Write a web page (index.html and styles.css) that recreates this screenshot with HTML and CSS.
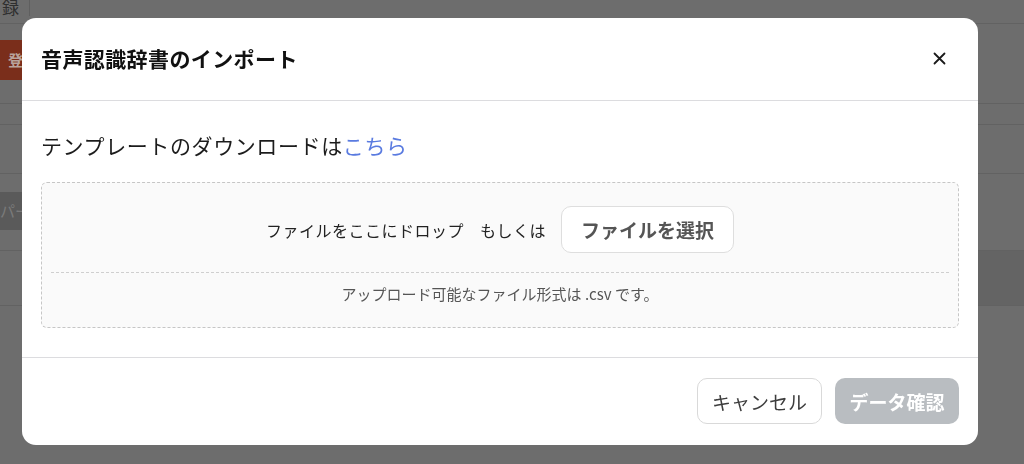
FILE: index.html
```html
<!DOCTYPE html>
<html lang="ja">
<head>
<meta charset="utf-8">
<title>音声認識辞書のインポート</title>
<link rel="stylesheet" href="styles.css">
</head>
<body>
<div class="page">
  <div class="row r0"><div class="cell-btn">録</div></div>
  <div class="row r1"><div class="red-btn">登</div></div>
  <div class="row r2"></div>
  <div class="row r3"></div>
  <div class="row r4"><div class="dark-cell">パー</div></div>
  <div class="row r5"><div class="spacer"></div><div class="dark-strip"></div></div>
  <div class="row r6"></div>
</div>

<div class="modal" role="dialog" aria-labelledby="mtitle">
  <div class="modal-header">
    <h2 id="mtitle" class="modal-title">音声認識辞書のインポート</h2>
    <button class="close-btn" aria-label="閉じる">
      <svg width="13" height="13" viewBox="0 0 13 13"><path d="M1.5 1.5 L11.5 11.5 M11.5 1.5 L1.5 11.5" stroke="#1a1a1a" stroke-width="1.8" stroke-linecap="round"/></svg>
    </button>
  </div>
  <div class="modal-body">
    <p class="template-line">テンプレートのダウンロードは<a class="link" href="#">こちら</a></p>
    <div class="dropzone">
      <div class="drop-row">
        <span class="drop-text">ファイルをここにドロップ</span>
        <span class="drop-text or">もしくは</span>
        <button class="select-btn">ファイルを選択</button>
      </div>
      <div class="drop-divider"></div>
      <p class="drop-note">アップロード可能なファイル形式は .csv です。</p>
    </div>
  </div>
  <div class="modal-footer">
    <button class="btn btn-cancel">キャンセル</button>
    <button class="btn btn-confirm" disabled>データ確認</button>
  </div>
</div>
</body>
</html>
```

FILE: styles.css
```css
* { box-sizing: border-box; }

html, body {
  margin: 0;
  padding: 0;
  width: 1024px;
  height: 464px;
  overflow: hidden;
  background: #6d6d6d;
  font-family: "Noto Sans CJK JP", "Noto Sans", sans-serif;
}

/* background page (seen under overlay) */
.page {
  display: flex;
  flex-direction: column;
}
.row {
  display: flex;
  border-bottom: 1px solid #626262;
}
.r0 { height: 24px; }
.r1 { height: 80px; align-items: flex-start; }
.r2 { height: 21px; }
.r3 { height: 49px; }
.r4 { height: 77px; align-items: flex-start; }
.r5 { height: 55px; }
.r6 { height: 40px; border-bottom: none; }

.cell-btn {
  width: 30px;
  height: 16px;
  border-right: 1px solid #5f5f5f;
  color: #2f2f2f;
  font-size: 17px;
  line-height: 14px;
  overflow: hidden;
  padding-left: 2px;
}
.red-btn {
  margin-top: 16px;
  width: 30px;
  height: 40px;
  background: #7a2e1b;
  color: #b9a39c;
  font-weight: 700;
  font-size: 15px;
  line-height: 40px;
  padding-left: 8px;
}
.dark-cell {
  margin-top: 18px;
  width: 30px;
  height: 38px;
  background: #5a5a5a;
  color: #7a7a7a;
  font-size: 15px;
  line-height: 38px;
  overflow: hidden;
  white-space: nowrap;
}
.spacer { flex: 1; }
.dark-strip {
  width: 50%;
  background: #646464;
}

/* modal */
.modal {
  position: fixed;
  left: 22px;
  top: 18px;
  width: 956px;
  height: 427px;
  background: #fff;
  border-radius: 14px;
  display: flex;
  flex-direction: column;
  overflow: hidden;
}
.modal-header {
  height: 83px;
  flex: none;
  display: flex;
  align-items: center;
  justify-content: space-between;
  padding: 0 32px 2px 19px;
  border-bottom: 1px solid #dcdcdf;
}
.modal-title {
  margin: 0;
  font-size: 21px;
  letter-spacing: 0.4px;
  font-weight: 700;
  color: #111;
  line-height: 30px;
}
.close-btn {
  border: none;
  background: none;
  padding: 0;
  width: 13px;
  height: 13px;
  display: flex;
  cursor: pointer;
}

.modal-body {
  flex: none;
  padding: 29px 19px 29px;
  border-bottom: 1px solid #dcdcdf;
}
.template-line {
  margin: 0;
  font-size: 21px;
  letter-spacing: 0.6px;
  line-height: 30px;
  color: #1c1c1c;
}
.link {
  color: #5a7be0;
  text-decoration: none;
}

.dropzone {
  margin-top: 22px;
  height: 146px;
  border: 1px dashed #c6c6c6;
  border-radius: 6px;
  background: #fafafa;
  padding: 23px 9px 0;
  display: flex;
  flex-direction: column;
}
.drop-row {
  display: flex;
  align-items: center;
  justify-content: center;
  height: 47px;
}
.drop-text {
  font-size: 16px;
  letter-spacing: 0.5px;
  color: #222;
}
.drop-text.or {
  margin-left: 16px;
  margin-right: 15px;
}
.select-btn {
  height: 47px;
  width: 173px;
  border: 1px solid #dedede;
  border-radius: 10px;
  background: #fff;
  font-family: inherit;
  font-size: 19px;
  font-weight: 700;
  color: #555;
  padding: 0;
}
.drop-divider {
  margin-top: 19px;
  border-top: 1px dashed #cfcfcf;
}
.drop-note {
  margin: 11px 0 0;
  text-align: center;
  font-size: 15px;
  line-height: 20px;
  color: #555;
}

.modal-footer {
  flex: 1;
  display: flex;
  justify-content: flex-end;
  align-items: flex-start;
  gap: 13px;
  padding: 20px 19px 0;
}
.btn {
  height: 46px;
  border-radius: 10px;
  font-family: inherit;
  font-size: 19px;
  padding: 0;
}
.btn-cancel {
  width: 125px;
  background: #fff;
  border: 1px solid #d9d9d9;
  color: #3d3d3d;
}
.btn-confirm {
  width: 124px;
  background: #b9bdc1;
  border: none;
  color: #fff;
  font-weight: 700;
}
```
